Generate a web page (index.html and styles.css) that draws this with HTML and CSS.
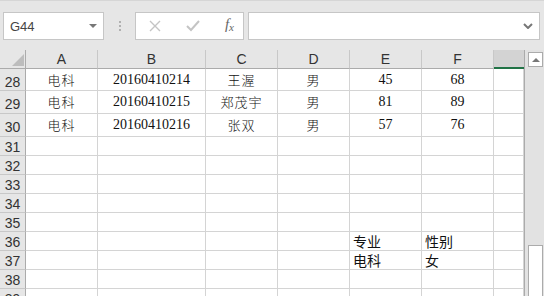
FILE: index.html
```html
<!doctype html>
<html>
<head>
    <meta charset='utf-8'>
    <title>Sheet</title>
    <link rel="stylesheet" href="styles.css">
</head>
<body>
    <div class="toolbar">
        <div class="nameBox">
            <span class="nameText">G44</span>
            <span class="nameArrow"></span>
        </div>
        <div class="dots"><i></i><i></i><i></i></div>
        <div class="fxBox">
            <svg class="fxIcon" width="14" height="14" viewBox="0 0 14 14"><path d="M2 2 L12 12 M12 2 L2 12" stroke="#c4c4c4" stroke-width="1.4" fill="none"/></svg>
            <svg class="fxIcon" width="16" height="14" viewBox="0 0 16 14"><path d="M2 7 L6 11 L14 2" stroke="#c4c4c4" stroke-width="2" fill="none"/></svg>
            <span class="fxText">f<sub>x</sub></span>
        </div>
        <div class="formulaBox">
            <svg class="chevron" width="10" height="6" viewBox="0 0 10 6"><path d="M1 1 L5 5 L9 1" stroke="#777" stroke-width="2" fill="none"/></svg>
        </div>
    </div>
    <div class="sheet">
        <div class="grid" id="grid">
            <div class="corner"><span class="tri"></span></div>
            <div class="colHead">A</div>
            <div class="colHead">B</div>
            <div class="colHead">C</div>
            <div class="colHead">D</div>
            <div class="colHead">E</div>
            <div class="colHead">F</div>
            <div class="colHead sel"></div>
        </div>
        <div class="vscroll">
            <div class="upBtn"><span class="upTri"></span></div>
            <div class="thumb"></div>
        </div>
    </div>
    <script>
        var grid = document.getElementById("grid");
        var rows = [
            [28, ["电科", "20160410214", "王渥", "男", "45", "68", ""], "tall"],
            [29, ["电科", "20160410215", "郑茂宇", "男", "81", "89", ""], "tall"],
            [30, ["电科", "20160410216", "张双", "男", "57", "76", ""], "tall"],
            [31, ["", "", "", "", "", "", ""], ""],
            [32, ["", "", "", "", "", "", ""], ""],
            [33, ["", "", "", "", "", "", ""], ""],
            [34, ["", "", "", "", "", "", ""], ""],
            [35, ["", "", "", "", "", "", ""], ""],
            [36, ["", "", "", "", "专业", "性别", ""], "plain"],
            [37, ["", "", "", "", "电科", "女", ""], "plain"],
            [38, ["", "", "", "", "", "", ""], ""],
            [39, ["", "", "", "", "", "", ""], ""]
        ];

        for (var i = 0; i < rows.length; i++)
        {
            var r = rows[i];
            var h = document.createElement("div");
            h.className = "rowHead" + (r[2] == "tall" ? " tall" : "");
            h.appendChild(document.createTextNode(r[0]));
            grid.appendChild(h);

            for (var j = 0; j < r[1].length; j++)
            {
                var c = document.createElement("div");
                var txt = r[1][j];
                c.className = "cell";
                if (r[2] == "tall") c.className += " tall";
                if (r[2] == "plain") c.className += " left";
                else if (/^[0-9]+$/.test(txt)) c.className += " num";
                else c.className += " cjk";
                c.appendChild(document.createTextNode(txt));
                grid.appendChild(c);
            }
        }
    </script>
</body>
</html>
```

FILE: styles.css
```css
html, body {
    margin: 0;
    padding: 0;
}

body {
    width: 544px;
    height: 296px;
    overflow: hidden;
    background: #e6e6e6;
    font-family: "Liberation Sans", Arial, sans-serif;
}

.toolbar {
    height: 50px;
    box-sizing: border-box;
    border-top: 1px solid #d6d6d6;
    padding: 11px 4px 0 3px;
    display: flex;
    align-items: flex-start;
}

.nameBox {
    width: 101px;
    height: 28px;
    box-sizing: border-box;
    background: #fff;
    border: 1px solid #c6c6c6;
    display: flex;
    align-items: center;
    justify-content: space-between;
    padding: 0 6px 0 6px;
}

.nameText {
    font-size: 13px;
    color: #444;
}

.nameArrow {
    width: 0;
    height: 0;
    border-left: 4px solid transparent;
    border-right: 4px solid transparent;
    border-top: 4px solid #777;
}

.dots {
    width: 31px;
    height: 28px;
    display: flex;
    flex-direction: column;
    align-items: center;
    justify-content: center;
    gap: 2px;
}

.dots i {
    width: 2px;
    height: 2px;
    background: #b0b0b0;
}

.fxBox {
    width: 109px;
    height: 28px;
    box-sizing: border-box;
    background: #fff;
    border: 1px solid #c6c6c6;
    display: flex;
    align-items: center;
    justify-content: space-between;
    padding: 0 9px 0 12px;
}

.fxText {
    font-family: "Liberation Serif", serif;
    font-style: italic;
    font-size: 15px;
    color: #666;
    margin-top: -3px;
}

.fxText sub {
    font-size: 11px;
    vertical-align: -2px;
}

.formulaBox {
    flex: 1;
    margin-left: 4px;
    height: 28px;
    box-sizing: border-box;
    background: #fff;
    border: 1px solid #c6c6c6;
    display: flex;
    align-items: center;
    justify-content: flex-end;
    padding-right: 6px;
}

.sheet {
    display: flex;
}

.grid {
    display: grid;
    grid-template-columns: 26px 72px 108px 72px 72px 72px 72px 30px;
    grid-template-rows: 19px 22px 23px 23px;
    grid-auto-rows: 19px;
    width: 524px;
    background: #fff;
}

.corner, .colHead, .rowHead, .cell {
    box-sizing: border-box;
    border-right: 1px solid #d4d4d4;
    border-bottom: 1px solid #d4d4d4;
}

.corner {
    background: #e6e6e6;
    border-right: 1px solid #ababab;
    border-bottom: 1px solid #ababab;
    position: relative;
}

.tri {
    position: absolute;
    right: 1px;
    bottom: 2px;
    width: 0;
    height: 0;
    border-left: 12px solid transparent;
    border-bottom: 12px solid #bdbdbd;
}

.colHead {
    background: #e6e6e6;
    border-right: 1px solid #c8c8c8;
    border-bottom: 1px solid #ababab;
    font-size: 14px;
    color: #333;
    text-align: center;
    line-height: 18px;
}

.colHead.sel {
    background: #d3d3d3;
    border-bottom: 2px solid #217346;
    border-right: none;
}

.rowHead {
    background: #e6e6e6;
    border-right: 1px solid #ababab;
    border-bottom: 1px solid #c8c8c8;
    font-size: 14px;
    color: #333;
    text-align: center;
    line-height: 20px;
    overflow: hidden;
}

.rowHead.tall {
    line-height: 26px;
}

.cell {
    font-size: 14px;
    color: #111;
    text-align: center;
    line-height: 20px;
    white-space: nowrap;
    overflow: hidden;
}

.cell.tall {
    line-height: 22px;
}

.cell.num {
    font-family: "Liberation Serif", serif;
    font-size: 14px;
}

.cell.cjk {
    font-family: "Noto Sans CJK SC", sans-serif;
    font-size: 13px;
    letter-spacing: 1px;
    font-weight: 300;
}

.cell.left {
    font-family: "Noto Sans CJK SC", sans-serif;
    text-align: left;
    padding-left: 3px;
    line-height: 19px;
    font-size: 14px;
}

.vscroll {
    width: 20px;
    border-left: 1px solid #ababab;
    background: #e2e2e2;
    position: relative;
}

.upBtn {
    margin: 2px 0 0 3px;
    width: 15px;
    height: 15px;
    box-sizing: border-box;
    background: #fff;
    border: 1px solid #ababab;
    display: flex;
    align-items: center;
    justify-content: center;
}

.upTri {
    width: 0;
    height: 0;
    border-left: 4px solid transparent;
    border-right: 4px solid transparent;
    border-bottom: 4px solid #777;
}

.thumb {
    position: absolute;
    left: 3px;
    top: 195px;
    width: 15px;
    height: 60px;
    box-sizing: border-box;
    background: #fff;
    border: 1px solid #ababab;
}
```
